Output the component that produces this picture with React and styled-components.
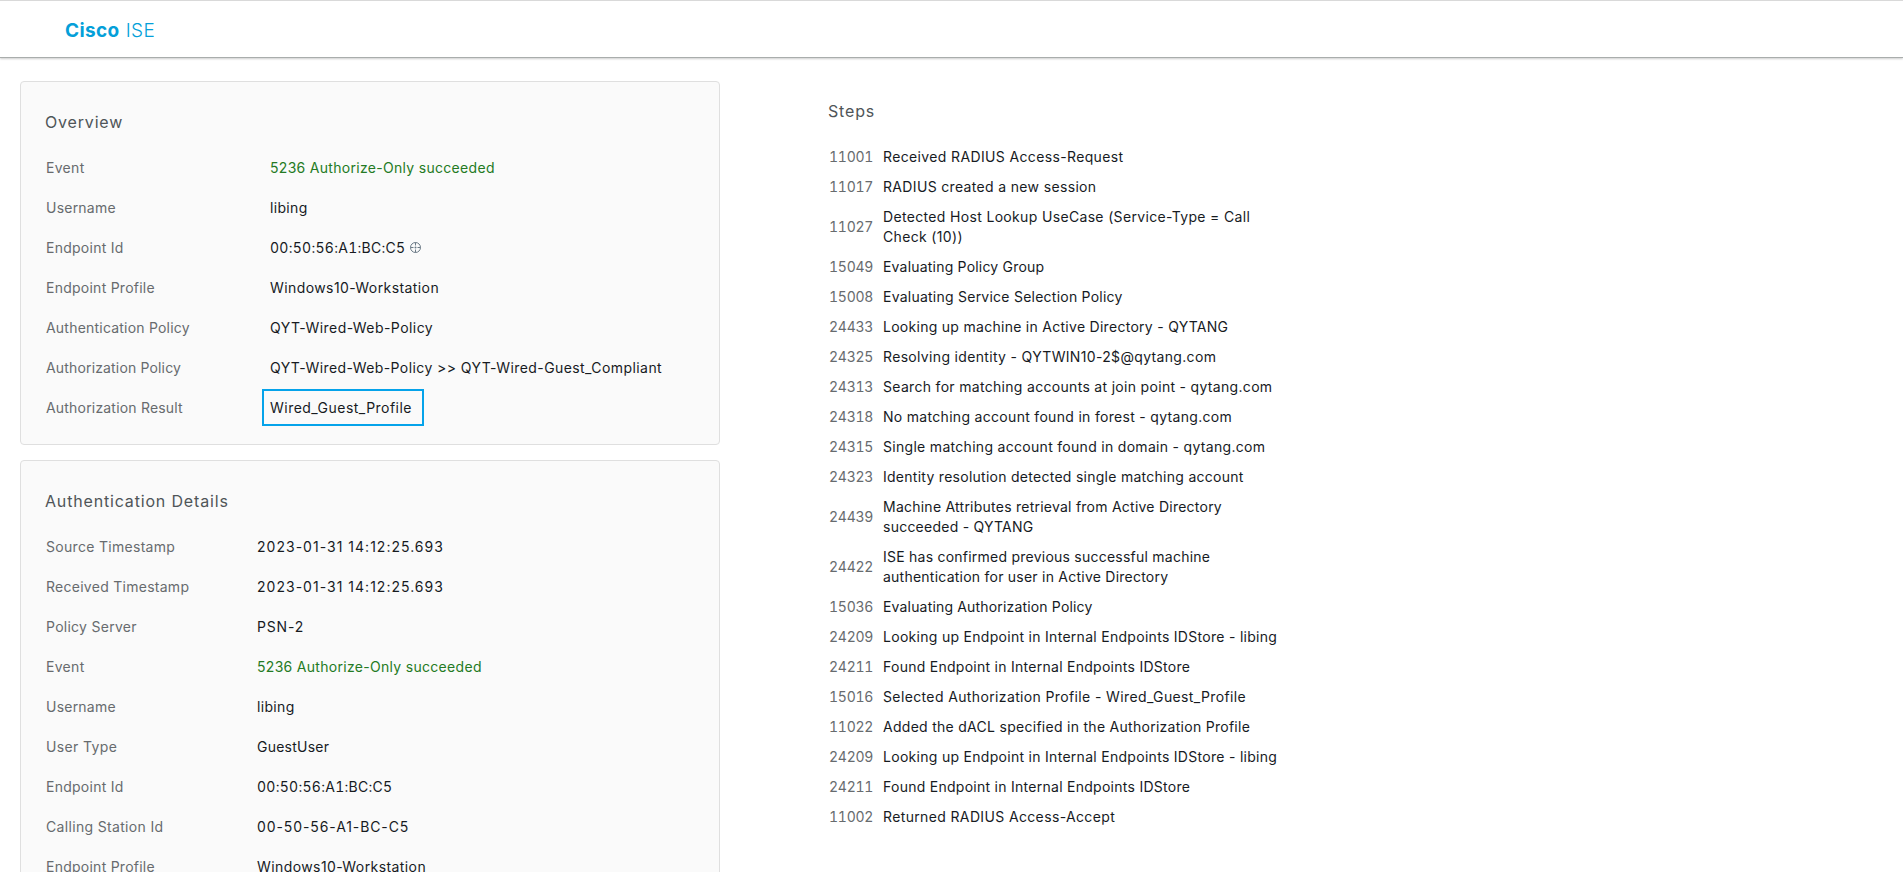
import React from 'react';
import styled, { createGlobalStyle } from 'styled-components';

const GlobalStyle = createGlobalStyle`
  * { box-sizing: border-box; }
  body {
    margin: 0;
    height: 872px;
    overflow: hidden;
    background: #fff;
    font-family: Inter, "Liberation Sans", sans-serif;
    font-size: 14px;
    line-height: 20px;
    color: #171b1f;
  }
`;

const Header = styled.header`
  display: flex;
  align-items: center;
  gap: 6px;
  height: 58px;
  padding: 4px 65px 0;
  border-top: 1px solid #d9d9d9;
  border-bottom: 1px solid #a9adac;
  box-shadow: 0 1px 2px rgba(0, 0, 0, 0.2);
  color: #049fd9;
  font-size: 19px;
  letter-spacing: 0.4px;
`;

const Brand = styled.span`
  font-weight: ${(p) => (p.$strong ? 700 : 300)};
`;

const Main = styled.main`
  display: grid;
  grid-template-columns: 700px 460px;
  column-gap: 108px;
  align-items: start;
  padding: 23px 20px 0;
`;

const Cards = styled.div`
  display: flex;
  flex-direction: column;
  gap: 15px;
`;

const Card = styled.section`
  padding: 24px 24px 16px;
  border: 1px solid #dfdfdf;
  border-radius: 4px;
  background: #fafafa;
`;

const Title = styled.h2`
  margin: 0 0 ${(p) => p.$gap}px;
  font-size: 16px;
  font-weight: 400;
  line-height: 32px;
  letter-spacing: 0.83px;
  color: #4f5558;
`;

const Field = styled.div`
  display: grid;
  grid-template-columns: ${(p) => p.$labelWidth}px 1fr;
  align-items: center;
  height: 40px;
  padding-left: 1px;
`;

const Label = styled.span`
  color: #676b6e;
  letter-spacing: ${(p) => p.$tracking}px;
`;

const Value = styled.span`
  display: flex;
  align-items: center;
  gap: 4px;
  white-space: nowrap;
  letter-spacing: ${(p) => p.$tracking}px;
  font-variant-numeric: ${(p) => (p.$tabular ? 'tabular-nums' : 'normal')};
  color: ${(p) => (p.$success ? '#247a24' : 'inherit')};
`;

const Highlight = styled.span`
  margin: -1px 0 0 -8px;
  padding: 7px 10px 6px 6px;
  border: 2px solid #05a3ea;
  width: 162px;
`;

const StepsPanel = styled.section`
  padding-top: 14px;
`;

const Step = styled.div`
  display: grid;
  grid-template-columns: 54px 400px;
  align-items: center;
  padding: 5px 0 5px 1px;
`;

const StepCode = styled.span`
  color: #676b6e;
  font-variant-numeric: tabular-nums;
  letter-spacing: -0.25px;
`;

const StepText = styled.span`
  letter-spacing: ${(p) => p.$tracking}px;
`;

const TargetSvg = styled.svg`
  display: block;
  margin-top: -2px;
`;

const TargetIcon = () => (
  <TargetSvg width="13" height="13" viewBox="0 0 13 13" fill="none" stroke="#6c7b87">
    <circle cx="6.5" cy="6.5" r="5" />
    <path d="M6.5 1.5v3M6.5 8.5v3M1.5 6.5h3M8.5 6.5h3" />
    <circle cx="6.5" cy="6.5" r="1" fill="#6c7b87" stroke="none" />
  </TargetSvg>
);

// label, label tracking, value, value tracking, options
const overview = [
  ['Event', 0.3, '5236 Authorize-Only succeeded', 0.3, { success: true }],
  ['Username', 0.22, 'libing', 0.34],
  ['Endpoint Id', 0.26, '00:50:56:A1:BC:C5', 0.28, { target: true, tabular: true }],
  ['Endpoint Profile', 0.25, 'Windows10-Workstation', 0.41],
  ['Authentication Policy', 0.21, 'QYT-Wired-Web-Policy', 0.44],
  ['Authorization Policy', 0.16, 'QYT-Wired-Web-Policy >> QYT-Wired-Guest_Compliant', 0.42],
  ['Authorization Result', 0.19, 'Wired_Guest_Profile', 0.47, { highlight: true }],
];

const details = [
  ['Source Timestamp', 0.3, '2023-01-31 14:12:25.693', 1.02],
  ['Received Timestamp', 0.27, '2023-01-31 14:12:25.693', 1.02],
  ['Policy Server', 0.27, 'PSN-2', 0.85],
  ['Event', 0.3, '5236 Authorize-Only succeeded', 0.3, { success: true }],
  ['Username', 0.22, 'libing', 0.34],
  ['User Type', 0.36, 'GuestUser', 0.24],
  ['Endpoint Id', 0.26, '00:50:56:A1:BC:C5', 0.28, { tabular: true }],
  ['Calling Station Id', 0.33, '00-50-56-A1-BC-C5', 0.9],
  ['Endpoint Profile', 0.25, 'Windows10-Workstation', 0.41],
];

const steps = [
  ['11001', 'Received RADIUS Access-Request', 0.36],
  ['11017', 'RADIUS created a new session', 0.34],
  ['11027', 'Detected Host Lookup UseCase (Service-Type = Call Check (10))', 0.335],
  ['15049', 'Evaluating Policy Group', 0.2],
  ['15008', 'Evaluating Service Selection Policy', 0.24],
  ['24433', 'Looking up machine in Active Directory - QYTANG', 0.28],
  ['24325', 'Resolving identity - QYTWIN10-2$@qytang.com', 0.33],
  ['24313', 'Search for matching accounts at join point - qytang.com', 0.31],
  ['24318', 'No matching account found in forest - qytang.com', 0.305],
  ['24315', 'Single matching account found in domain - qytang.com', 0.3],
  ['24323', 'Identity resolution detected single matching account', 0.27],
  ['24439', 'Machine Attributes retrieval from Active Directory succeeded - QYTANG', 0.24],
  ['24422', 'ISE has confirmed previous successful machine authentication for user in Active Directory', 0.235],
  ['15036', 'Evaluating Authorization Policy', 0.17],
  ['24209', 'Looking up Endpoint in Internal Endpoints IDStore - libing', 0.29],
  ['24211', 'Found Endpoint in Internal Endpoints IDStore', 0.27],
  ['15016', 'Selected Authorization Profile - Wired_Guest_Profile', 0.37],
  ['11022', 'Added the dACL specified in the Authorization Profile', 0.28],
  ['24209', 'Looking up Endpoint in Internal Endpoints IDStore - libing', 0.29],
  ['24211', 'Found Endpoint in Internal Endpoints IDStore', 0.27],
  ['11002', 'Returned RADIUS Access-Accept', 0.36],
];

const DetailCard = ({ title, fields, labelWidth }) => (
  <Card>
    <Title $gap={10}>{title}</Title>
    {fields.map(([label, labelTracking, value, tracking, options = {}]) => (
      <Field key={label} $labelWidth={labelWidth}>
        <Label $tracking={labelTracking}>{label}</Label>
        <Value $tracking={tracking} $success={options.success} $tabular={options.tabular}>
          {options.highlight ? <Highlight>{value}</Highlight> : value}
          {options.target && <TargetIcon />}
        </Value>
      </Field>
    ))}
  </Card>
);

export default function App() {
  return (
    <>
      <GlobalStyle />
      <Header>
        <Brand $strong>Cisco</Brand>
        <Brand>ISE</Brand>
      </Header>
      <Main>
        <Cards>
          <DetailCard title="Overview" fields={overview} labelWidth={224} />
          <DetailCard title="Authentication Details" fields={details} labelWidth={211} />
        </Cards>
        <StepsPanel>
          <Title $gap={15}>Steps</Title>
          {steps.map(([code, text, tracking], index) => (
            <Step key={index}>
              <StepCode>{code}</StepCode>
              <StepText $tracking={tracking}>{text}</StepText>
            </Step>
          ))}
        </StepsPanel>
      </Main>
    </>
  );
}
